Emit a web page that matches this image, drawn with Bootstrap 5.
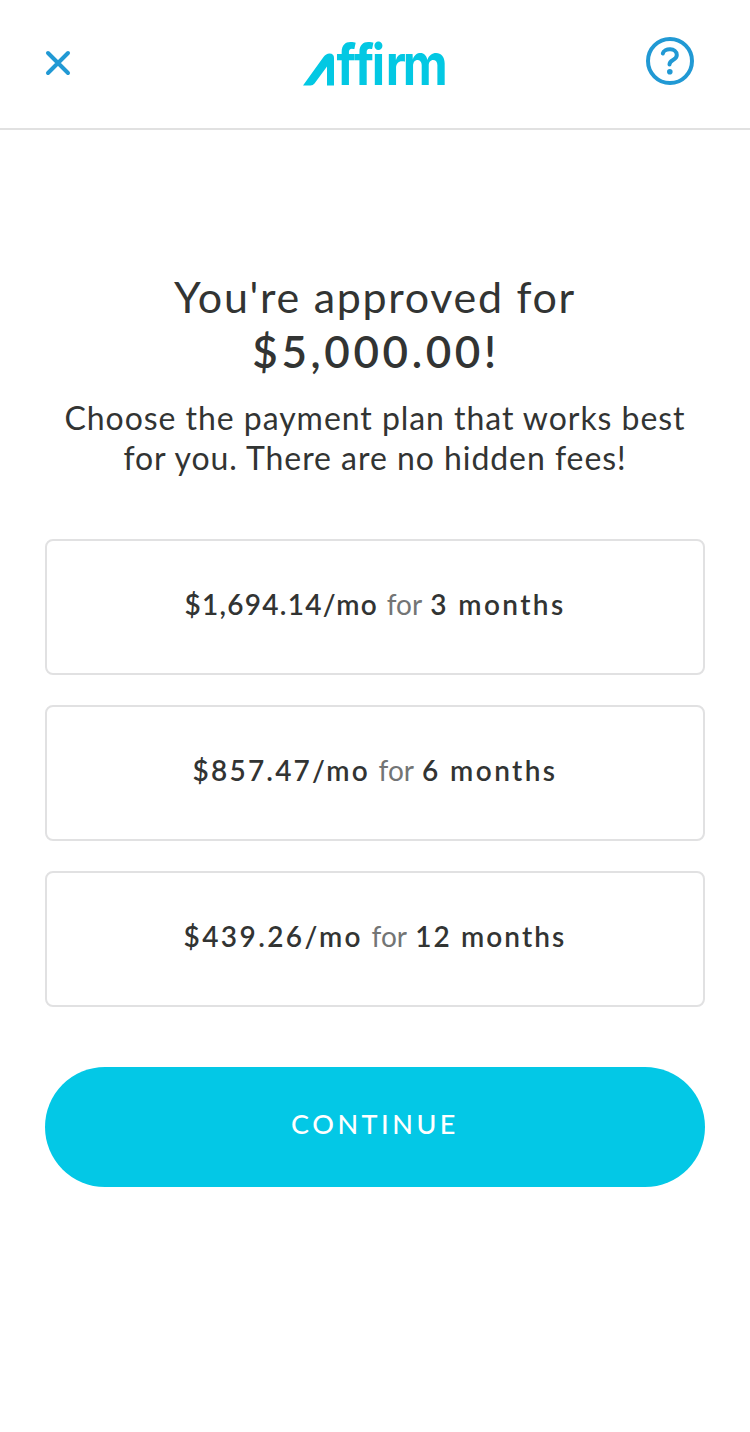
<!DOCTYPE html>
<html lang="en">
<head>
<meta charset="utf-8">
<meta name="viewport" content="width=device-width, initial-scale=1">
<title>Affirm</title>
<link rel="stylesheet" href="https://cdn.jsdelivr.net/npm/bootstrap@5.3.0/dist/css/bootstrap.min.css">
<style>
  body { font-family: Lato, "Open Sans", sans-serif; color: #323433; }
  .top-bar { height: 130px; padding: 0 45px; border-bottom: 2px solid #e1e1e1; }
  .top-bar svg { display: block; }
  .icon-btn { color: #2199d4; }
  .brand-word { font: 700 56px Inter, sans-serif; font-variant-ligatures: none; fill: #03c8e3; }
  .offer { padding: 140px 45px 0; }
  .offer-title { font-size: 43px; line-height: 54px; letter-spacing: 1.7px; margin: 0 0 19px; font-weight: 400; }
  .offer-title strong { font-size: 44px; font-weight: 600; letter-spacing: 3.6px; margin-right: -2px; }
  .offer-text { font-size: 32px; line-height: 40px; letter-spacing: .95px; margin: 0 0 61px; }
  .plan-list { gap: 30px; }
  .plan { height: 136px; padding-bottom: 6px; border: 2px solid #e1e1e2; border-radius: 8px; background: #fff; font-size: 28px; word-spacing: 1.5px; color: #737575; }
  .plan b { font-weight: 600; color: #323433; letter-spacing: 2.4px; word-spacing: 0; }
  .plan .term-tight { letter-spacing: 2.1px; }
  .plan .amount-mid { letter-spacing: 2.2px; }
  .plan .amount-tight { letter-spacing: 1.3px; }
  .btn-continue { height: 120px; margin-top: 60px; padding: 0 0 6px; border: 0; border-radius: 60px; background: #03c8e6; color: #fff; font-size: 27px; font-weight: 500; letter-spacing: 3.5px; }
</style>
</head>
<body class="bg-white">
<header class="top-bar d-flex justify-content-between">
  <a href="#" class="icon-btn" aria-label="Close"><svg width="60" height="128" viewBox="45 0 60 128" fill="none" stroke="currentColor" stroke-width="4" stroke-linecap="round"><path d="M48 53l20 20M68 53l-20 20"/></svg></a>
  <a href="#" aria-label="Affirm"><svg width="150" height="128" viewBox="300 0 150 128">
    <path d="M303 85.500L323.500 57Q326 53.500 329.500 53.500Q334 53.500 334 58V85.500H327V66.500L314.500 83.500Q313 85.500 310.500 85.500Z" fill="#03c8e3"/>
    <text class="brand-word" transform="scale(.88 1)" x="382.500 402.500 422.500 438.500 457.800" y="85.500">ffirm</text>
  </svg></a>
  <a href="#" class="icon-btn" aria-label="Help"><svg width="60" height="128" viewBox="645 0 60 128" fill="none" stroke="currentColor" stroke-width="4" stroke-linecap="round"><circle cx="670" cy="61" r="22"/><path d="M662.800 53.500C664 47.800 676.800 47.500 676.800 55C676.800 60.500 669.500 59.500 669.500 64.500"/><circle cx="669.800" cy="71.800" r="2.800" fill="currentColor" stroke="none"/></svg></a>
</header>
<main class="offer text-center">
  <h1 class="offer-title">You're approved for<br><strong>$5,000.00!</strong></h1>
  <p class="offer-text">Choose the payment plan that works best<br>for you. There are no hidden fees!</p>
  <div class="plan-list d-flex flex-column">
    <div class="plan d-flex align-items-center justify-content-center"><div><b class="amount-tight">$1,694.14/mo</b> for <b>3 months</b></div></div>
    <div class="plan d-flex align-items-center justify-content-center"><div><b class="amount-mid">$857.47/mo</b> for <b>6 months</b></div></div>
    <div class="plan d-flex align-items-center justify-content-center"><div><b>$439.26/mo</b> for <b class="term-tight">12 months</b></div></div>
  </div>
  <button type="button" class="btn btn-continue w-100">CONTINUE</button>
</main>
<script src="https://cdn.jsdelivr.net/npm/bootstrap@5.3.0/dist/js/bootstrap.bundle.min.js"></script>
</body>
</html>
